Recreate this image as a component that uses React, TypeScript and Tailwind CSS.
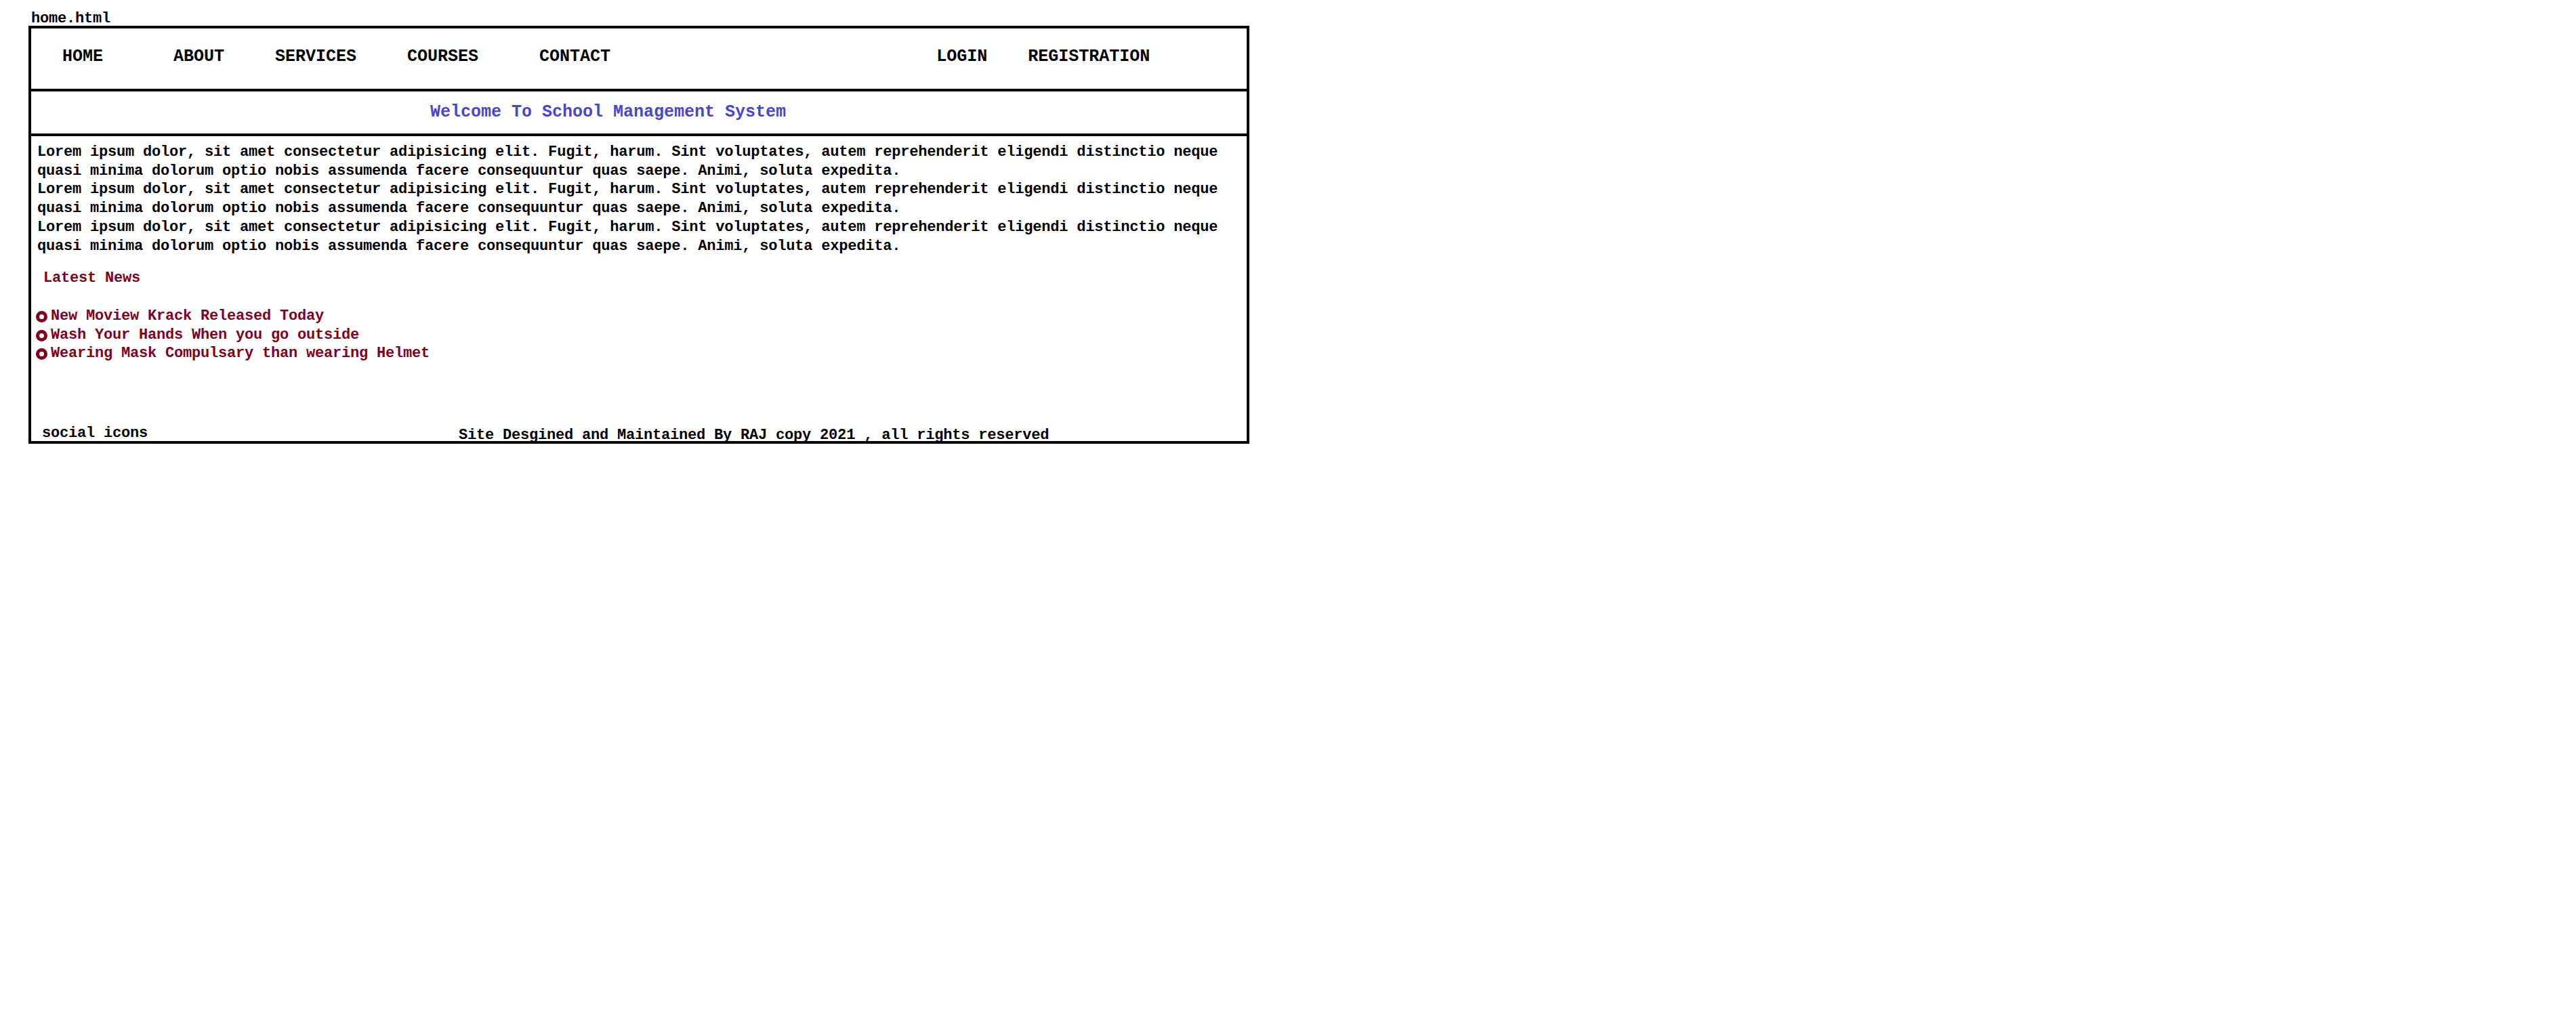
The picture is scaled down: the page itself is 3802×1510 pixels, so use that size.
import React from "react";

const mono = "font-['Liberation_Mono','DejaVu_Sans_Mono',monospace] font-bold";

const lorem =
  "Lorem ipsum dolor, sit amet consectetur adipisicing elit. Fugit, harum. Sint voluptates, autem reprehenderit eligendi distinctio neque quasi minima dolorum optio nobis assumenda facere consequuntur quas saepe. Animi, soluta expedita.";

const news = [
  "New Moview Krack Released Today",
  "Wash Your Hands When you go outside",
  "Wearing Mask Compulsary than wearing Helmet",
];

export default function App() {
  return (
    <div className={`min-h-screen bg-white text-black pt-[15px] pl-[42px] ${mono}`}>
      <div className="h-[23px] pl-[4px] text-[22px] leading-[25px] tracking-[-0.2px]">home.html</div>

      <div className="w-[1802px] border-4 border-black">
        {/* Header / navigation */}
        <nav className="h-[93px] border-b-4 border-black pt-[28px] flex text-[25px] leading-[28px]">
          <span className="ml-[46px]">HOME</span>
          <span className="ml-[104px]">ABOUT</span>
          <span className="ml-[75px]">SERVICES</span>
          <span className="ml-[75px]">COURSES</span>
          <span className="ml-[90px]">CONTACT</span>
          <span className="ml-[481px]">LOGIN</span>
          <span className="ml-[60px]">REGISTRATION</span>
        </nav>

        {/* Welcome */}
        <div className="h-[66px] border-b-4 border-black pt-[17px] pl-[589px] text-[25px] leading-[28px] text-[#4646cf]">
          Welcome To School Management System
        </div>

        {/* Main */}
        <div className="h-[450px] flex flex-col pt-[10px] text-[22px] leading-[27.7px] tracking-[-0.2px]">
          <div className="pl-[9px]">
            <p>{lorem}</p>
            <p>{lorem}</p>
            <p>{lorem}</p>
          </div>

          <h3 className="mt-[20px] pl-[18px] text-[#80001c]">Latest News</h3>

          <ul className="mt-[28px] pl-[7px] text-[#80001c]">
            {news.map((n) => (
              <li key={n} className="flex items-start">
                <span className="mt-[6px] w-[17px] h-[17px] rounded-full border-[5px] border-[#80001c] shrink-0" />
                <span className="ml-[5px]">{n}</span>
              </li>
            ))}
          </ul>

          <footer className="mt-auto h-[24px] flex items-start leading-[24px]">
            <span className="mt-[1px] ml-[16px]">social icons</span>
            <span className="mt-[4px] ml-[459px]">Site Desgined and Maintained By RAJ copy 2021 , all rights reserved</span>
          </footer>
        </div>
      </div>
    </div>
  );
}
